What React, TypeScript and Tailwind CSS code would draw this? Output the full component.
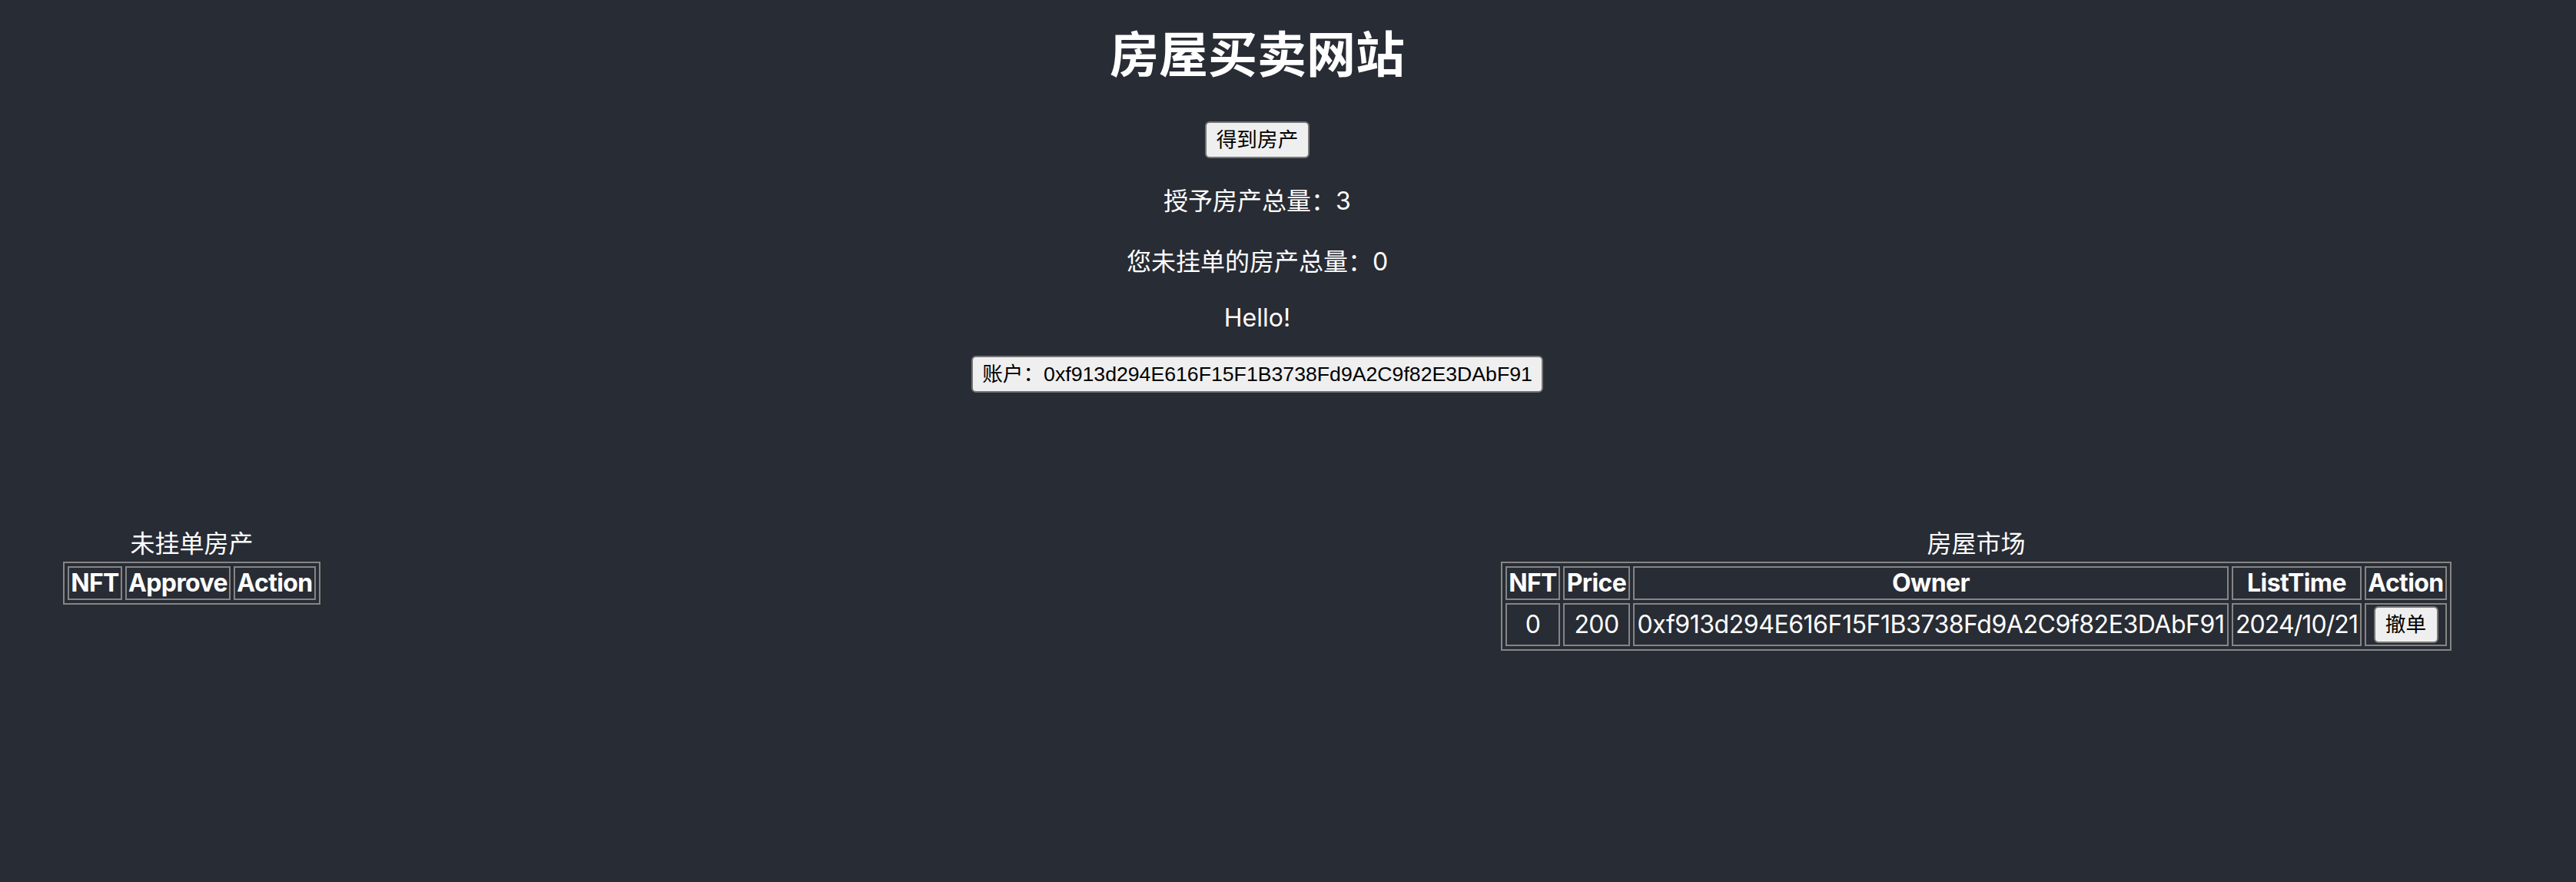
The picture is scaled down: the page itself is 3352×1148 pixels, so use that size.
const owner = "0xf913d294E616F15F1B3738Fd9A2C9f82E3DAbF91";

const btn =
  "bg-[#efefef] text-black border-2 border-[#767676] rounded-[6px] text-[26.67px] leading-[40px] h-[48px] font-['Liberation_Sans','Noto_Sans_CJK_SC',sans-serif]";
const cell = "border-2 border-[#858585] p-[2px] text-[32px] leading-[36px] tracking-[-0.6px]";

function UnlistedTable() {
  return (
    <div className="flex flex-col items-center">
      <p className="text-[32px] leading-[32px]">未挂单房产</p>
      <table className="mt-[7px] border-separate border-spacing-[4px] border-2 border-[#858585]">
        <thead>
          <tr>
            <th className={`${cell} w-[71px] font-bold`}>NFT</th>
            <th className={`${cell} w-[137px] font-bold`}>Approve</th>
            <th className={`${cell} w-[107px] font-bold`}>Action</th>
          </tr>
        </thead>
        <tbody></tbody>
      </table>
    </div>
  );
}

function MarketTable() {
  return (
    <div className="flex flex-col items-center">
      <p className="text-[32px] leading-[32px]">房屋市场</p>
      <table className="mt-[7px] border-separate border-spacing-[4px] border-2 border-[#858585]">
        <thead>
          <tr>
            <th className={`${cell} w-[71px] font-bold`}>NFT</th>
            <th className={`${cell} w-[87px] font-bold`}>Price</th>
            <th className={`${cell} w-[775px] font-bold`}>Owner</th>
            <th className={`${cell} w-[169px] font-bold`}>ListTime</th>
            <th className={`${cell} w-[107px] font-bold`}>Action</th>
          </tr>
        </thead>
        <tbody>
          <tr>
            <td className={cell}>0</td>
            <td className={cell}>200</td>
            <td className={`${cell} whitespace-nowrap !tracking-[-0.45px]`}>{owner}</td>
            <td className={`${cell} whitespace-nowrap !tracking-[-0.9px]`}>2024/10/21</td>
            <td className={`${cell} align-middle`}>
              <button className={`${btn} block mx-auto w-[84px] tracking-normal`}>撤单</button>
            </td>
          </tr>
        </tbody>
      </table>
    </div>
  );
}

export default function App() {
  return (
    <div className="min-h-[1148px] w-full bg-[#282c34] text-white text-center font-['Inter','Noto_Sans_CJK_SC',sans-serif]">
      {/* header block */}
      <header className="flex flex-col items-center pr-[80px] pt-[39px]">
        <h1 className="text-[64px] leading-[64px] font-bold">房屋买卖网站</h1>
        <button className={`${btn} mt-[55px] px-[13px]`}>得到房产</button>
        <p className="mt-[40px] text-[32px] leading-[32px]">授予房产总量：3</p>
        <p className="mt-[47px] text-[32px] leading-[32px]">您未挂单的房产总量：0</p>
        <p className="mt-[41px] text-[32px] leading-[32px]">Hello!</p>
        <button className={`${btn} mt-[33px] px-[12px]`}>账户：{owner}</button>
      </header>

      <div className="flex justify-between items-start pl-[82px] pr-[162px] mt-[181px]">
        <UnlistedTable />
        <MarketTable />
      </div>
    </div>
  );
}
